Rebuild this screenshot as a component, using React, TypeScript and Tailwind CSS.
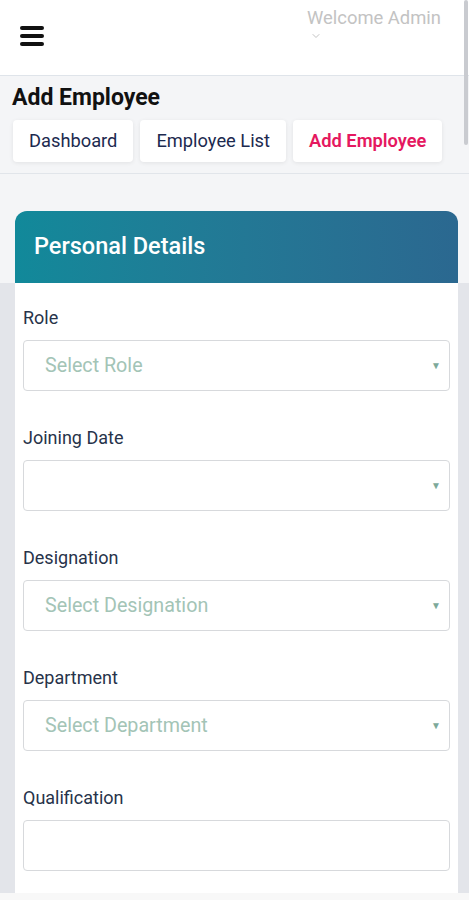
import { ChevronDown } from 'lucide-react';

// ==----------------------------------------------------------------------------
// Add Employee page (mobile)
// ==----------------------------------------------------------------------------

const fields = [
  { label: 'Role', placeholder: 'Select Role', select: true },
  { label: 'Joining Date', placeholder: '', select: true },
  { label: 'Designation', placeholder: 'Select Designation', select: true },
  { label: 'Department', placeholder: 'Select Department', select: true },
  { label: 'Qualification', placeholder: '', select: false },
];

export default function App() {
  return (
    <div className="relative h-[900px] overflow-hidden bg-[#f4f5f7] font-['Roboto',sans-serif]">
      {/* Header */}
      <header className="flex h-[76px] items-start justify-between border-b border-[#dfe4ea] bg-white pr-[28px]">
        <button className="mt-[26px] ml-[20px] flex w-[24px] flex-col gap-[4px]">
          <span className="h-[4px] rounded-full bg-[#111]" />
          <span className="h-[4px] rounded-full bg-[#111]" />
          <span className="h-[4px] rounded-full bg-[#111]" />
        </button>
        <div className="mt-[6px] flex flex-col items-start">
          <span className="text-[18.4px] leading-[24px] text-[#c3c3c3]">Welcome Admin</span>
          <ChevronDown className="ml-[3px] h-[12px] w-[12px] text-[#c3c3c3]" strokeWidth={2} />
        </div>
      </header>

      {/* Title + tabs */}
      <div className="border-b border-[#e1e5ea] px-[12px] pt-[7px] pb-[11px]">
        <h1 className="text-[23px] leading-[30px] font-bold text-[#111]">Add Employee</h1>
        <div className="mt-[7px] flex gap-[7px] pl-[1px]">
          <TabButton label="Dashboard" />
          <TabButton label="Employee List" />
          <TabButton label="Add Employee" active />
        </div>
      </div>

      {/* Card */}
      <div className="pt-[37px]">
        <div className="pr-[11px] pl-[15px]">
          <div className="flex h-[72px] items-center rounded-t-[12px] bg-gradient-to-r from-[#11899a] to-[#2b6890] pl-[19px]">
            <h2 className="text-[23.5px] font-medium text-white">Personal Details</h2>
          </div>
        </div>
        <div className="bg-[#e3e5ea] pr-[11px] pl-[15px]">
          <div className="bg-white px-[8px] pt-[23px] pb-[20px]">
            {fields.map((f) => (
              <Field key={f.label} {...f} />
            ))}
          </div>
        </div>
      </div>

      {/* Scrollbar thumb */}
      <div className="absolute top-0 right-[1px] h-[145px] w-[4px] rounded-full bg-[#c9cbd0]" />
      {/* Bottom strip */}
      <div className="absolute right-0 bottom-0 left-0 h-[7px] bg-[#f8f8f8]" />
    </div>
  );
}

// ==----------------------------------------------------------------------------
// Sous-composants
// ==----------------------------------------------------------------------------

function TabButton({ label, active }: { label: string; active?: boolean }) {
  return (
    <button
      className={`h-[42px] rounded-[4px] bg-white px-[16px] text-[18.3px] shadow-[0_1px_4px_rgba(0,0,0,0.08)] ${
        active ? 'font-semibold text-[#e5185f]' : 'text-[#1c2a4f]'
      }`}
    >
      {label}
    </button>
  );
}

interface FieldProps {
  label: string;
  placeholder: string;
  select: boolean;
}

function Field({ label, placeholder, select }: FieldProps) {
  return (
    <div className="mb-[35px]">
      <label className="block text-[18px] leading-[24px] text-[#27334a]">{label}</label>
      <div className="mt-[10px] flex h-[51px] items-center justify-between rounded-[4px] border border-[#d7d9dc] pr-[8px] pl-[21px]">
        <span className="text-[19.7px] text-[#a3c4b6]">{placeholder}</span>
        {select && <span className="text-[10px] text-[#7da99a]">▼</span>}
      </div>
    </div>
  );
}
